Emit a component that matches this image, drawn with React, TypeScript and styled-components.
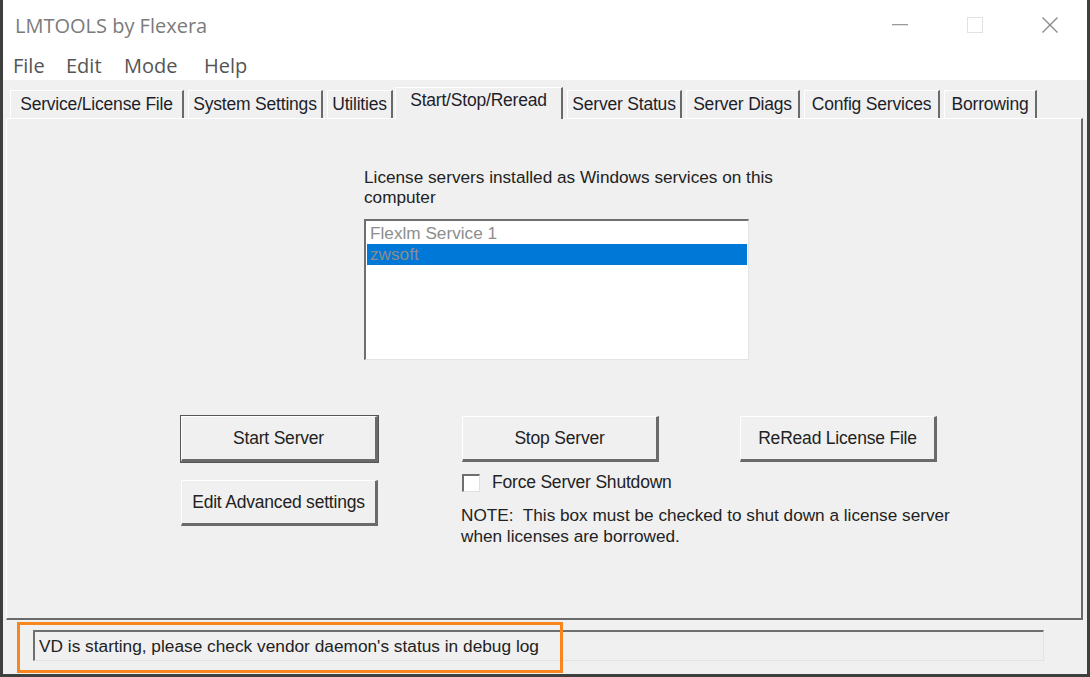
import React from "react";
import styled, { createGlobalStyle } from "styled-components";

const Global = createGlobalStyle`
  html, body { margin: 0; padding: 0; }
  body { width: 1090px; height: 677px; overflow: hidden; background: #3a3f3a; }
  #root { width: 1090px; height: 677px; }
`;

const Desktop = styled.div`
  width: 1090px;
  height: 677px;
  padding: 0 3px 3px 3px;
  box-sizing: border-box;
  background: #3d403c;
`;

const Window = styled.div`
  height: 100%;
  display: flex;
  flex-direction: column;
  background: #ffffff;
  font-family: "Liberation Sans", Arial, sans-serif;
`;

const TitleBar = styled.div`
  height: 50px;
  display: flex;
  align-items: center;
  justify-content: space-between;
  padding-left: 12px;
`;

const Title = styled.div`
  font-family: "Open Sans", "Noto Sans", sans-serif;
  font-size: 20px;
  color: #7b7b7b;
`;

const Controls = styled.div`
  display: flex;
  height: 100%;
`;

const CtrlBtn = styled.div`
  width: 75px;
  height: 100%;
  display: flex;
  align-items: center;
  justify-content: center;
`;

const MenuBar = styled.div`
  height: 30px;
  display: flex;
  align-items: center;
  padding-left: 10px;
`;

const MenuItem = styled.div<{ $w: number }>`
  width: ${(p) => p.$w}px;
  font-family: "Open Sans", "Noto Sans", sans-serif;
  font-size: 20px;
  color: #555;
`;

const Body = styled.div`
  flex: 1;
  background: #f0f0f0;
  display: flex;
  flex-direction: column;
  padding: 8px 2px 0 3px;
`;

const TabStrip = styled.div`
  display: flex;
  height: 30px;
  align-items: flex-end;
  padding-left: 4px;
`;

const Tab = styled.div<{ $w: number; $active?: boolean }>`
  box-sizing: border-box;
  width: ${(p) => p.$w}px;
  height: ${(p) => (p.$active ? 32 : 28)}px;
  margin-left: ${(p) => (p.$active ? 2 : 4)}px;
  margin-bottom: ${(p) => (p.$active ? -1 : 0)}px;
  border-top: 1px solid #ffffff;
  border-left: 1px solid #ffffff;
  border-right: 2px solid #6a6a6a;
  background: #f0f0f0;
  display: flex;
  align-items: center;
  justify-content: center;
  font-size: 17.5px;
  letter-spacing: -0.2px;
  white-space: nowrap;
  color: #1e1e2a;
  padding-bottom: ${(p) => (p.$active ? 6 : 0)}px;
  position: relative;
  z-index: ${(p) => (p.$active ? 2 : 1)};
  &:first-child { margin-left: 0; }
`;

const Panel = styled.div`
  box-sizing: border-box;
  height: 502px;
  margin-right: 2px;
  border-top: 1px solid #ffffff;
  border-left: 1px solid #ffffff;
  border-right: 2px solid #6a6a6a;
  border-bottom: 2px solid #6a6a6a;
  display: flex;
  flex-direction: column;
`;

const ListSection = styled.div`
  padding: 48px 0 0 357px;
  width: 440px;
`;

const Label = styled.div`
  font-size: 17.2px;
  line-height: 20px;
  color: #222;
  width: 440px;
`;

const ListBox = styled.div`
  box-sizing: border-box;
  margin-top: 12px;
  width: 385px;
  height: 141px;
  background: #ffffff;
  border-top: 2px solid #6f6f6f;
  border-left: 2px solid #6f6f6f;
  border-right: 1px solid #e3e3e3;
  border-bottom: 1px solid #e3e3e3;
  padding: 2px 1px 0 1px;
`;

const ListItem = styled.div<{ $selected?: boolean }>`
  height: 21px;
  line-height: 21px;
  padding-left: 3px;
  font-size: 17.2px;
  color: #8d8d8d;
  background: ${(p) => (p.$selected ? "#0078d7" : "transparent")};
`;

const Controls2 = styled.div`
  display: grid;
  grid-template-columns: 281px 278px 197px;
  padding: 56px 0 0 174px;
`;

const Column = styled.div`
  display: flex;
  flex-direction: column;
  align-items: flex-start;
`;

const Button = styled.div<{ $default?: boolean }>`
  box-sizing: border-box;
  width: 197px;
  height: 46px;
  display: flex;
  align-items: center;
  justify-content: center;
  background: #f0f0f0;
  border-top: 1px solid #ffffff;
  border-left: 1px solid #ffffff;
  border-right: 3px solid #6a6a6a;
  border-bottom: 3px solid #6a6a6a;
  box-shadow: ${(p) => (p.$default ? "0 0 0 1px #555" : "none")};
  font-size: 17.5px;
  letter-spacing: -0.2px;
  white-space: nowrap;
  color: #222;
  margin-bottom: 18px;
`;

const CheckRow = styled.div`
  display: flex;
  align-items: center;
  gap: 12px;
  margin-top: -8px;
  font-size: 17.5px;
  letter-spacing: -0.2px;
  color: #222;
`;

const CheckBox = styled.div`
  box-sizing: border-box;
  width: 18px;
  height: 18px;
  background: #fff;
  border-top: 2px solid #6f6f6f;
  border-left: 2px solid #6f6f6f;
  border-right: 1px solid #e0e0e0;
  border-bottom: 1px solid #e0e0e0;
`;

const Note = styled.div`
  margin-top: 12px;
  margin-left: -1px;
  width: 560px;
  font-size: 17.2px;
  line-height: 21px;
  color: #222;
  white-space: nowrap;
`;

const StatusArea = styled.div`
  position: relative;
  flex: 1;
  padding: 10px 0 0 27px;
`;

const StatusField = styled.div`
  box-sizing: border-box;
  width: 1011px;
  height: 31px;
  border-top: 2px solid #6f6f6f;
  border-left: 2px solid #6f6f6f;
  border-right: 1px solid #e3e3e3;
  border-bottom: 1px solid #e3e3e3;
  display: flex;
  align-items: center;
  padding-left: 4px;
  font-size: 17.3px;
  color: #222;
  white-space: nowrap;
`;

const Highlight = styled.div`
  position: absolute;
  left: 11px;
  top: 2px;
  width: 546px;
  height: 51px;
  box-sizing: border-box;
  border: 3px solid #f7861e;
  pointer-events: none;
`;

const tabs: { label: string; w: number; active?: boolean }[] = [
  { label: "Service/License File", w: 174 },
  { label: "System Settings", w: 135 },
  { label: "Utilities", w: 66 },
  { label: "Start/Stop/Reread", w: 168, active: true },
  { label: "Server Status", w: 115 },
  { label: "Server Diags", w: 114 },
  { label: "Config Services", w: 136 },
  { label: "Borrowing", w: 93 },
];

export default function App() {
  return (
    <>
      <Global />
      <Desktop>
        <Window>
          <TitleBar>
            <Title>LMTOOLS by Flexera</Title>
            <Controls>
              <CtrlBtn>
                <svg width="16" height="2" viewBox="0 0 16 2">
                  <rect width="16" height="1.3" fill="#9a9a9a" />
                </svg>
              </CtrlBtn>
              <CtrlBtn>
                <svg width="16" height="16" viewBox="0 0 16 16">
                  <rect x="0.5" y="0.5" width="15" height="15" fill="none" stroke="#e2e2e2" strokeWidth="1" />
                </svg>
              </CtrlBtn>
              <CtrlBtn>
                <svg width="16" height="16" viewBox="0 0 16 16">
                  <path d="M0.5 0.5 L15.5 15.5 M15.5 0.5 L0.5 15.5" stroke="#8a8a8a" strokeWidth="1.4" />
                </svg>
              </CtrlBtn>
            </Controls>
          </TitleBar>
          <MenuBar>
            <MenuItem $w={53}>File</MenuItem>
            <MenuItem $w={58}>Edit</MenuItem>
            <MenuItem $w={80}>Mode</MenuItem>
            <MenuItem $w={60}>Help</MenuItem>
          </MenuBar>
          <Body>
            <TabStrip>
              {tabs.map((t) => (
                <Tab key={t.label} $w={t.w} $active={t.active}>
                  {t.label}
                </Tab>
              ))}
            </TabStrip>
            <Panel>
              <ListSection>
                <Label>License servers installed as Windows services on this computer</Label>
                <ListBox>
                  <ListItem>Flexlm Service 1</ListItem>
                  <ListItem $selected>zwsoft</ListItem>
                </ListBox>
              </ListSection>
              <Controls2>
                <Column>
                  <Button $default>Start Server</Button>
                  <Button>Edit Advanced settings</Button>
                </Column>
                <Column>
                  <Button>Stop Server</Button>
                  <CheckRow>
                    <CheckBox />
                    Force Server Shutdown
                  </CheckRow>
                  <Note>
                    NOTE:&nbsp; This box must be checked to shut down a license server
                    <br />
                    when licenses are borrowed.
                  </Note>
                </Column>
                <Column>
                  <Button>ReRead License File</Button>
                </Column>
              </Controls2>
            </Panel>
            <StatusArea>
              <StatusField>VD is starting, please check vendor daemon's status in debug log</StatusField>
              <Highlight />
            </StatusArea>
          </Body>
        </Window>
      </Desktop>
    </>
  );
}
